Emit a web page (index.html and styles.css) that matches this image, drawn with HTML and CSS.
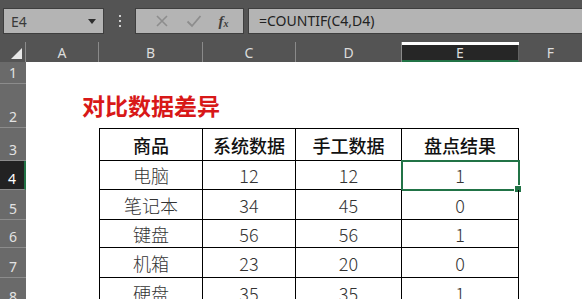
FILE: index.html
```html
<!DOCTYPE html>
<html>
<head>
    <title>对比数据差异</title>
    <link rel="stylesheet" href="styles.css">
</head>
<body>
    <div class="toolbar">
        <div class="name-box">
            <span>E4</span>
            <span class="caret"></span>
        </div>
        <div class="grip"><i></i><i></i><i></i></div>
        <div class="fx-buttons">
            <svg width="14" height="14" viewBox="0 0 14 14"><path d="M2 2L12 12M12 2L2 12" stroke="#8d8d8d" stroke-width="1.6" fill="none"/></svg>
            <svg width="16" height="14" viewBox="0 0 16 14"><path d="M1.5 7.5L6 12L14.5 2" stroke="#8d8d8d" stroke-width="1.8" fill="none"/></svg>
            <span class="fx">f<sub>x</sub></span>
        </div>
        <div class="formula">=COUNTIF(C4,D4)</div>
    </div>

    <div class="sheet">
        <div class="corner"><span class="tri"></span></div>
        <div class="col-head">A</div>
        <div class="col-head">B</div>
        <div class="col-head">C</div>
        <div class="col-head">D</div>
        <div class="col-head active">E</div>
        <div class="col-head last">F</div>

        <div class="row-head">1</div>
        <div class="cell"></div><div class="cell"></div><div class="cell"></div><div class="cell"></div><div class="cell"></div><div class="cell"></div>

        <div class="row-head">2</div>
        <div class="cell"></div>
        <div class="cell title">对比数据差异</div>
        <div class="cell"></div><div class="cell"></div><div class="cell"></div><div class="cell"></div>

        <div class="row-head">3</div>
        <div class="cell"></div>
        <div class="cell td th first top">商品</div>
        <div class="cell td th top">系统数据</div>
        <div class="cell td th top">手工数据</div>
        <div class="cell td th top">盘点结果</div>
        <div class="cell"></div>

        <div class="row-head active">4</div>
        <div class="cell"></div>
        <div class="cell td first">电脑</div>
        <div class="cell td">12</div>
        <div class="cell td">12</div>
        <div class="cell td selected">1<span class="handle"></span></div>
        <div class="cell"></div>

        <div class="row-head">5</div>
        <div class="cell"></div>
        <div class="cell td first">笔记本</div>
        <div class="cell td">34</div>
        <div class="cell td">45</div>
        <div class="cell td">0</div>
        <div class="cell"></div>

        <div class="row-head">6</div>
        <div class="cell"></div>
        <div class="cell td first">键盘</div>
        <div class="cell td">56</div>
        <div class="cell td">56</div>
        <div class="cell td">1</div>
        <div class="cell"></div>

        <div class="row-head">7</div>
        <div class="cell"></div>
        <div class="cell td first">机箱</div>
        <div class="cell td">23</div>
        <div class="cell td">20</div>
        <div class="cell td">0</div>
        <div class="cell"></div>

        <div class="row-head">8</div>
        <div class="cell"></div>
        <div class="cell td first">硬盘</div>
        <div class="cell td">35</div>
        <div class="cell td">35</div>
        <div class="cell td">1</div>
        <div class="cell"></div>
    </div>
</body>
</html>
```

FILE: styles.css
```css
body {
    margin: 0;
    width: 582px;
    height: 299px;
    overflow: hidden;
    background: #ffffff;
    font-family: "Noto Sans", "Noto Sans CJK SC", sans-serif;
}

.toolbar {
    display: flex;
    align-items: flex-start;
    height: 42px;
    padding: 8px 0 0 3px;
    box-sizing: border-box;
    background: #545454;
}

.name-box {
    display: flex;
    align-items: center;
    justify-content: space-between;
    width: 101px;
    height: 26px;
    padding: 0 7px 0 7px;
    box-sizing: border-box;
    background: #b4b4b4;
    border: 1px solid #3e3e3e;
    color: #3a3a3a;
    font-size: 14px;
}

.caret {
    width: 0;
    height: 0;
    border-left: 4px solid transparent;
    border-right: 4px solid transparent;
    border-top: 5px solid #2e2e2e;
}

.grip {
    display: flex;
    flex-direction: column;
    justify-content: center;
    gap: 3px;
    width: 31px;
    height: 26px;
    align-items: center;
}

.grip i {
    width: 2px;
    height: 2px;
    background: #cfcfcf;
}

.fx-buttons {
    display: flex;
    align-items: center;
    justify-content: space-around;
    width: 109px;
    height: 26px;
    padding: 0 6px 0 10px;
    box-sizing: border-box;
    background: #b4b4b4;
    border: 1px solid #3e3e3e;
}

.fx {
    font-family: "Liberation Serif", serif;
    font-style: italic;
    font-weight: bold;
    font-size: 15px;
    color: #3c3c3c;
}

.fx sub {
    font-size: 10px;
    vertical-align: -1px;
}

.formula {
    flex: 1;
    height: 26px;
    margin-left: 4px;
    padding-left: 10px;
    box-sizing: border-box;
    line-height: 24px;
    background: #b4b4b4;
    border: 1px solid #3e3e3e;
    border-right: none;
    color: #222222;
    font-size: 14px;
}

.sheet {
    display: grid;
    grid-template-columns: 26px 73px 104px 93px 106px 117px 1fr;
    grid-template-rows: 20px 22px 44px 33px 29px 30px 28px 30px 30px;
}

.corner {
    position: relative;
    background: #545454;
    border-right: 1px solid #8a8a8a;
}

.tri {
    position: absolute;
    right: 3px;
    bottom: 3px;
    width: 0;
    height: 0;
    border-left: 11px solid transparent;
    border-bottom: 11px solid #e8e8e8;
}

.col-head {
    display: flex;
    align-items: center;
    justify-content: center;
    background: #545454;
    border-right: 1px solid #8a8a8a;
    color: #dcdcdc;
    font-size: 14px;
}

.col-head.active {
    margin-top: 3px;
    background: #262626;
    border-bottom: 2px solid #217346;
    border-right-color: #626262;
}

.col-head.last {
    border-right: none;
}

.row-head {
    display: flex;
    align-items: flex-end;
    justify-content: center;
    padding-bottom: 1px;
    box-sizing: border-box;
    background: #6a6a6a;
    border-bottom: 1px solid #8c8c8c;
    color: #e2e2e2;
    font-size: 14px;
}

.row-head.active {
    background: #222222;
    border-right: 2px solid #217346;
    color: #ffffff;
}

.cell {
    position: relative;
    display: flex;
    align-items: center;
    justify-content: center;
    box-sizing: border-box;
}

.title {
    align-items: flex-end;
    padding-bottom: 6px;
    white-space: nowrap;
    color: #d81818;
    font-family: "Noto Sans CJK SC", sans-serif;
    font-weight: bold;
    font-size: 23px;
}

.td {
    border-right: 1px solid #000000;
    border-bottom: 1px solid #000000;
    color: #333333;
    font-family: "Noto Sans CJK SC", sans-serif;
    font-weight: 300;
    font-size: 18px;
}

.td.first {
    border-left: 1px solid #000000;
}

.td.top {
    border-top: 1px solid #000000;
}

.th {
    color: #111111;
    font-weight: 500;
}

.selected {
    outline: 2px solid #217346;
    outline-offset: -1px;
}

.handle {
    position: absolute;
    right: -4px;
    bottom: -4px;
    width: 6px;
    height: 6px;
    background: #217346;
    border: 1px solid #ffffff;
}
```
